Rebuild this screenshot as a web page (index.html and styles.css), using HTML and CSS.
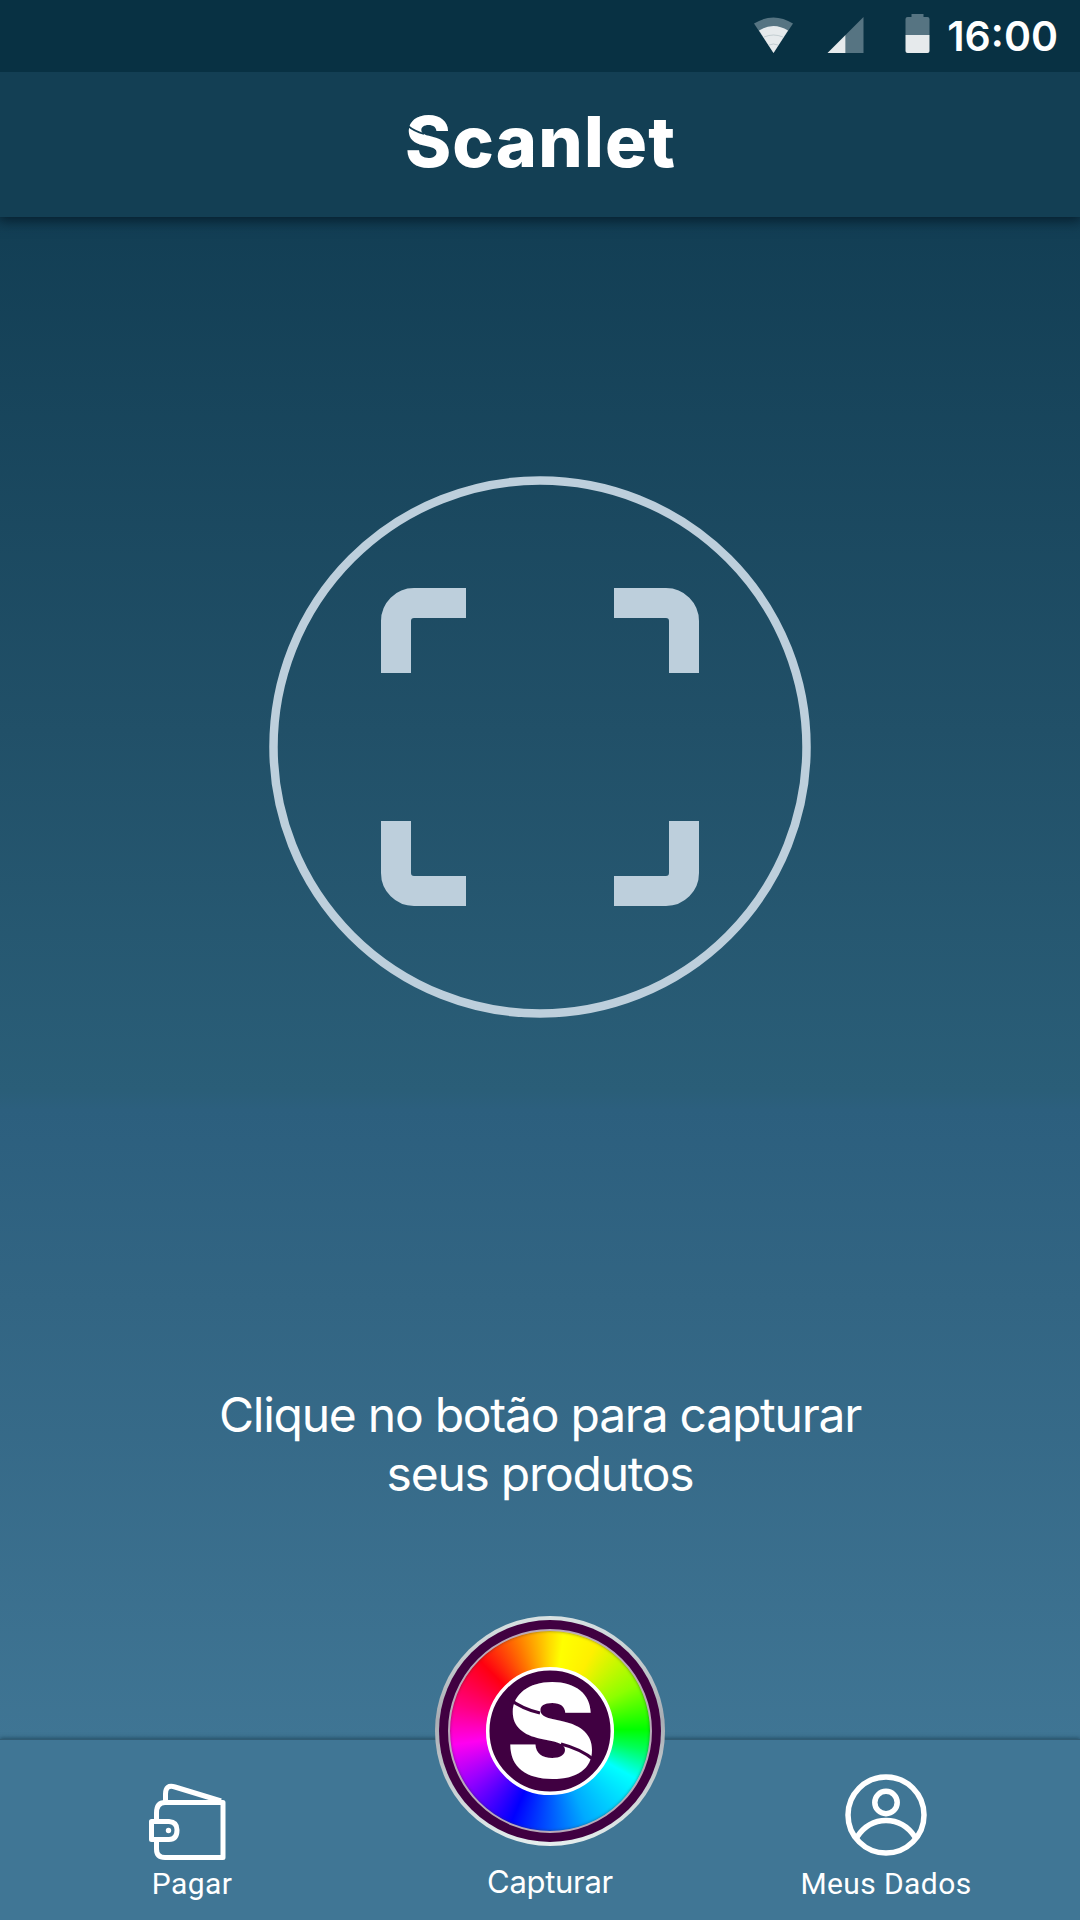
FILE: index.html
```html
<!DOCTYPE html>
<html lang="pt-BR">
<head>
    <meta charset="UTF-8">
    <meta name="viewport" content="width=device-width, initial-scale=1.0">
    <title>Scanlet</title>
    <link rel="stylesheet" href="styles.css">
</head>
<body>
    <div class="app">
        <div class="status-bar">
            <svg class="status-icons" width="180" height="40" viewBox="0 0 180 40">
                <path class="dim" d="M0 6.500Q19.500-5.500 39 6.500L19.500 36Z"/>
                <path class="lit" d="M5 13.500Q19.500 4.500 34 13.500L19.500 36Z"/>
                <path class="wave" d="M10 20Q19.500 16 29 20M15 28Q19.500 26 24 28"/>
                <path class="dim" d="M109.500 0V36H91.500V18Z"/>
                <path class="lit" d="M91.500 18V36H73.500Z"/>
                <path class="dim" d="M151.500 18V2Q151.500 0 153.500 0H157.500V-3H169.500V0H173.500Q175.500 0 175.500 2V18Z"/>
                <path class="lit" d="M151.500 18H175.500V34Q175.500 36 173.500 36H153.500Q151.500 36 151.500 34Z"/>
            </svg>
            <span class="clock">16:00</span>
        </div>

        <header class="header">
            <h1 class="title">Scanlet
                <svg class="title-cut" width="44" height="54" viewBox="0 0 44 54">
                    <path d="M1 10Q7 15 17 18" />
                </svg>
            </h1>
        </header>

        <main class="content">
            <svg class="scan" width="542" height="542" viewBox="0 0 542 542">
                <circle cx="271" cy="271" r="266.500"/>
                <path d="M127 197V145A18 18 0 0 1 145 127H197"/>
                <path d="M345 127H397A18 18 0 0 1 415 145V197"/>
                <path d="M127 345V397A18 18 0 0 0 145 415H197"/>
                <path d="M345 415H397A18 18 0 0 0 415 397V345"/>
            </svg>
            <p class="hint">Clique no botão para capturar<br><span class="hint-end">seus produtos</span></p>
        </main>

        <nav class="nav">
            <a class="nav-item pay">
                <svg class="nav-icon" width="78" height="78" viewBox="0 0 78 78">
                    <path d="M6.500 36V29Q6.500 18.500 15 18.500H73V73.500H15Q6.500 73.500 6.500 65V56"/>
                    <path d="M15.500 18V10Q15.500 0 25 3L71 17"/>
                    <path d="M1.500 37.500H19Q27 38 27 46Q27 55.500 19 55.500H1.500Z"/>
                    <circle class="dot" cx="18.500" cy="46.500" r="2.700"/>
                </svg>
                <span>Pagar</span>
            </a>
            <a class="nav-item capture">
                <div class="wheel-rim">
                    <div class="wheel-frame">
                        <div class="wheel">
                            <svg class="logo" width="128" height="128" viewBox="0 0 128 128">
                                <circle cx="64" cy="64" r="62.300"/>
                                <text class="logo-letter" x="20.500" y="110.500" textLength="89" lengthAdjust="spacingAndGlyphs">S</text>
                                <path d="M22 31Q36 42 54 46M75 77Q95 82 108 93"/>
                            </svg>
                        </div>
                    </div>
                </div>
                <span>Capturar</span>
            </a>
            <a class="nav-item profile">
                <svg class="nav-icon" width="82" height="82" viewBox="0 0 82 82">
                    <circle cx="41" cy="41" r="38"/>
                    <circle cx="41" cy="28.500" r="11.200"/>
                    <path d="M12 63Q23 46.500 41 46.500T70 63"/>
                </svg>
                <span>Meus Dados</span>
            </a>
        </nav>
    </div>
</body>
</html>
```
FILE: styles.css
```css
*{
    margin: 0;
    padding: 0;
    box-sizing: border-box;
}

body{
    font-family: Inter, "Open Sans", sans-serif;
    color: white;
}

svg{
    display: block;
    overflow: visible;
}

.app{
    width: 1080px;
    height: 1920px;
    display: flex;
    flex-direction: column;
    overflow: hidden;
    background: linear-gradient(#123e54 210px, #215068 730px, #2a5e78 1090px, #2c5f7e 1110px, #326583 1300px, #3f7594 1739px);
}

.status-bar{
    height: 72px;
    background-color: #083143;
    display: flex;
    justify-content: flex-end;
    padding: 17px 22px 0 0;
    position: relative;
    z-index: 1;
}

.status-icons{
    margin-right: 13px;
}

.dim{
    fill: #567482;
}

.lit{
    fill: #e6eaec;
}

.wave{
    fill: none;
    stroke: #aab8bd;
    stroke-width: 0.6;
}

.clock{
    font-size: 41px;
    line-height: 39px;
    font-weight: 600;
    letter-spacing: 0;
    white-space: nowrap;
}

.header{
    height: 145px;
    flex: none;
    display: flex;
    justify-content: center;
    background-color: #133f54;
    box-shadow: 0 2px 12px 2px #061f2e;
}

.title{
    position: relative;
    font-size: 70px;
    line-height: 84px;
    font-weight: 800;
    padding: 28px 0 0 1px;
    letter-spacing: 1.2px;
    white-space: nowrap;
}

.title-cut{
    position: absolute;
    left: 3px;
    top: 44px;
    fill: none;
    stroke: #133f54;
    stroke-width: 1.8;
}

.content{
    flex: 1;
    display: flex;
    flex-direction: column;
    align-items: center;
    padding-top: 259px;
}

.scan{
    fill: none;
    stroke: #bdcfdc;
    stroke-width: 8.5;
}

.scan path{
    stroke-width: 30;
}

.hint{
    margin-top: 367px;
    font-size: 48px;
    line-height: 59px;
    font-weight: 400;
    text-align: center;
    letter-spacing: -1.25px;
    white-space: nowrap;
}

.nav{
    height: 181px;
    flex: none;
    display: grid;
    grid-template-columns: 384px 332px 364px;
    background-color: #407695;
    border-top: 1px solid #315b73;
    box-shadow: 0 -1px 4px rgba(5, 35, 50, 0.5);
}

.nav-item{
    display: flex;
    flex-direction: column;
    align-items: center;
    font-family: Roboto, sans-serif;
    font-size: 30px;
    line-height: 36px;
    letter-spacing: 0.4px;
}

.nav-icon{
    fill: none;
    stroke: white;
    stroke-width: 5;
    stroke-linejoin: round;
}

.nav-icon .dot{
    fill: white;
    stroke: none;
}

.pay{
    padding-top: 44px;
}

.pay svg{
    margin-left: -7px;
    margin-bottom: 4px;
}

.profile{
    padding: 34px 24px 0 0;
}

.profile svg{
    margin-bottom: 10px;
}

.profile .nav-icon{
    stroke-width: 5.5;
}

.capture{
    margin-top: -124px;
    font-family: Inter, sans-serif;
    font-size: 31px;
    font-weight: 400;
    letter-spacing: -0.3px;
}

.wheel-rim{
    width: 230px;
    height: 230px;
    padding: 4px;
    margin-bottom: 18px;
    border-radius: 50%;
    background: linear-gradient(#d8e2e3, #a9adb3 45%, #e5eeee);
}

.wheel-frame{
    height: 100%;
    padding: 9px;
    border-radius: 50%;
    background-color: #400041;
}

.wheel{
    height: 100%;
    display: grid;
    place-items: center;
    border: 2px solid #b9a9b9;
    border-radius: 50%;
    background: conic-gradient(#ffdc00, #ffff00 8deg, #fff000 28deg, #8cff00 62deg, #00ff00 89deg, #00ff58 101deg, #00ffff 119deg, #00aaff 158deg, #0000ff 203deg, #9900ff 238deg, #ff00f0 262deg, #ff0080 286deg, #ff0010 315deg, #ff7800 340deg, #ffdc00) border-box;
    box-shadow: inset 0 0 3px rgba(50, 50, 50, 0.6);
}

.logo{
    fill: none;
}

.logo circle{
    fill: #400041;
    stroke: white;
    stroke-width: 3.5;
}

.logo path{
    stroke: #400041;
    stroke-width: 3;
}

.logo-letter{
    fill: white;
    font-family: Inter, sans-serif;
    font-size: 130px;
    font-weight: 900;
}
```
